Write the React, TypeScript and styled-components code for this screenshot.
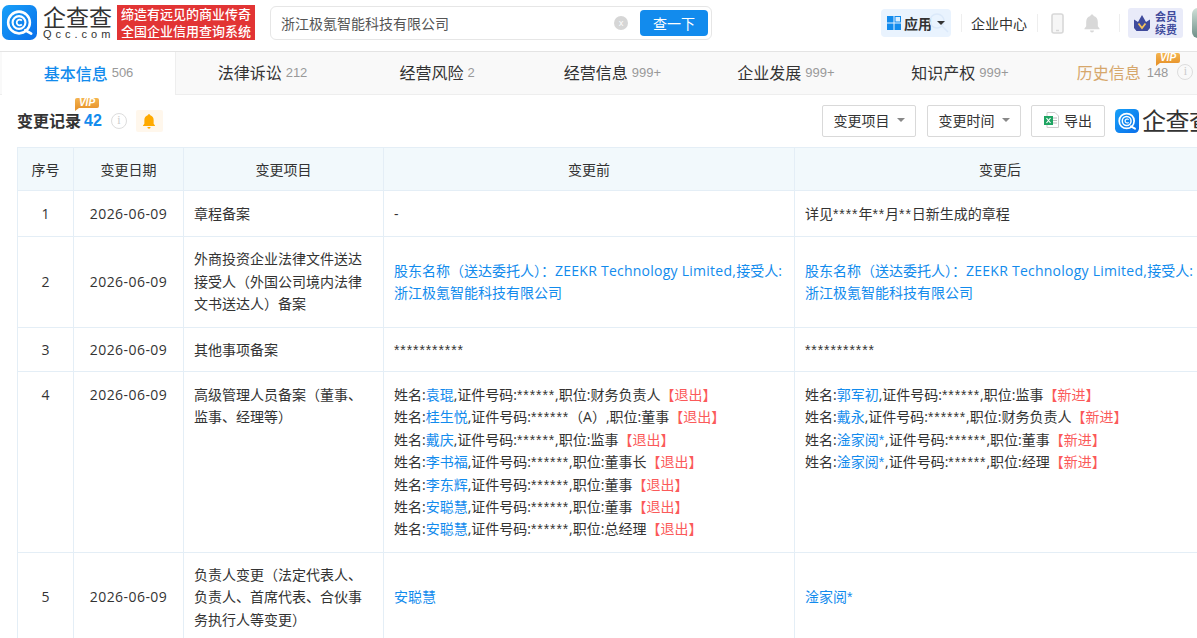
import React from "react";
import styled, { createGlobalStyle } from "styled-components";

const Global = createGlobalStyle`
  html, body { margin: 0; padding: 0; background: #fff; }
  body { font-family: "Open Sans", "Noto Sans CJK SC", sans-serif; color: #333; font-size: 14px; }
  * { box-sizing: border-box; }
`;

const Page = styled.div`
  width: 1197px;
  height: 638px;
  overflow: hidden;
  background: #fff;
`;

const Header = styled.header`
  height: 52px;
  display: flex;
  align-items: flex-start;
  padding: 5px 0 0 2px;
  background: #fff;
  border-bottom: 1px solid #e4e4e4;
  box-shadow: 0 1px 3px rgba(0, 0, 0, 0.08);
  position: relative;
`;

const LogoWrap = styled.div`
  display: flex;
  width: 115px;
  height: 35px;
  gap: 6px;
  flex: none;
`;

const LogoWords = styled.div`
  display: flex;
  flex-direction: column;
  align-items: flex-start;
  color: #333;
`;

const LogoCn = styled.span`
  font-size: 23px;
  line-height: 24px;
  font-weight: 400;
  color: #333;
`;

const LogoEn = styled.span`
  font-size: 11px;
  line-height: 11px;
  letter-spacing: 4px;
  font-family: "Liberation Sans", sans-serif;
  color: #333;
`;

const Banner = styled.div`
  width: 138px;
  height: 35px;
  background: #e23434;
  color: #fff;
  font-size: 13px;
  line-height: 17px;
  font-weight: 500;
  text-align: center;
  white-space: nowrap;
  padding-top: 1px;
  flex: none;
`;

const SearchBox = styled.div`
  margin: 1px 0 0 15px;
  width: 442px;
  height: 34px;
  border: 1px solid #e6e6e6;
  border-radius: 6px;
  display: flex;
  align-items: center;
  padding: 0 3px 0 10px;
  flex: none;
`;

const SearchText = styled.span`
  flex: 1;
  font-size: 14px;
  color: #555;
`;

const Clear = styled.span`
  width: 14px;
  height: 14px;
  border-radius: 50%;
  background: #d6d6d6;
  color: #fff;
  font-size: 9px;
  line-height: 14px;
  text-align: center;
  margin-right: 12px;
`;

const SearchButton = styled.button`
  width: 68px;
  height: 26px;
  border: 0;
  border-radius: 4px;
  background: #128bed;
  color: #fff;
  font: inherit;
  font-size: 14px;
  padding: 0;
`;

const AppPill = styled.div`
  margin: 4px 0 0 169px;
  width: 70px;
  height: 28px;
  background: #e9f3fe;
  border-radius: 4px;
  display: flex;
  align-items: center;
  padding-left: 6px;
  gap: 3px;
  font-size: 14px;
  font-weight: 700;
  color: #333;
  flex: none;
  position: relative;
`;

const PillGlass = styled.svg`
  position: absolute;
  right: 1px;
  top: 3px;
`;

const Caret = styled.i<{ $color?: string }>`
  width: 0;
  height: 0;
  border-left: 4px solid transparent;
  border-right: 4px solid transparent;
  border-top: 4px solid ${(p) => p.$color || "#333"};
  display: inline-block;
  margin-left: 2px;
  position: relative;
`;

const VLine = styled.span<{ $ml?: number }>`
  width: 1px;
  height: 18px;
  background: #eee;
  flex: none;
  margin-top: 9px;
  margin-left: ${(p) => p.$ml || 0}px;
`;

const HeaderLink = styled.span`
  margin: 8px 10px 0 9px;
  font-size: 14px;
  line-height: 22px;
  color: #333;
  width: 56px;
  white-space: nowrap;
  flex: none;
`;

const IconSlot = styled.span<{ $w: number }>`
  width: ${(p) => p.$w}px;
  display: flex;
  justify-content: center;
  margin-top: 8px;
  flex: none;
`;

const Member = styled.div`
  margin: 3px 0 0 8px;
  width: 55px;
  height: 30px;
  background: #e9ebf9;
  border-radius: 3px;
  display: flex;
  align-items: center;
  justify-content: center;
  gap: 5px;
  flex: none;
`;

const MemberText = styled.span`
  font-size: 11px;
  line-height: 13px;
  font-weight: 700;
  color: #3f4a9c;
  width: 22px;
`;

const Avatar = styled.span`
  width: 16px;
  height: 30px;
  margin: 3px 0 0 9px;
  border-radius: 6px 0 0 6px;
  background: linear-gradient(#cfe0d8, #6f8f88);
  flex: none;
`;

const Tabs = styled.nav`
  height: 43px;
  display: flex;
  background: #f9f9f9;
  padding-left: 2px;
  border-bottom: 1px solid #eee;
  position: relative;
`;

const Tab = styled.div<{ $w: number; $active?: boolean }>`
  width: ${(p) => p.$w}px;
  flex: none;
  display: flex;
  align-items: center;
  justify-content: center;
  gap: 4px;
  padding-bottom: 2px;
  white-space: nowrap;
  position: relative;
  background: ${(p) => (p.$active ? "#fff" : "transparent")};
  border-right: ${(p) => (p.$active ? "1px solid #eee" : "0")};
  margin-bottom: ${(p) => (p.$active ? "-1px" : "0")};
`;

const TabLabel = styled.span<{ $tone?: string }>`
  font-size: 16px;
  font-weight: ${(p) => (p.$tone === "blue" ? 500 : 400)};
  color: ${(p) => (p.$tone === "blue" ? "#128bed" : p.$tone === "gold" ? "#d6a76c" : "#333")};
`;

const TabCount = styled.span<{ $ml?: number }>`
  font-size: 13px;
  color: #999;
  font-family: "Liberation Sans", sans-serif;
  margin-left: ${(p) => p.$ml || 0}px;
`;

const VipBadge = styled.span`
  position: absolute;
  background: linear-gradient(#f5b54f, #e8962f);
  color: #fff;
  font-size: 10px;
  font-weight: 700;
  font-style: italic;
  line-height: 10px;
  width: 24px;
  height: 10px;
  text-align: center;
  border-radius: 2px 2px 2px 0;
  font-family: "Liberation Sans", sans-serif;
  &::after {
    content: "";
    position: absolute;
    left: 0;
    top: 100%;
    border-top: 3px solid #e8962f;
    border-right: 4px solid transparent;
  }
`;

const TabVip = styled(VipBadge)`
  left: 108px;
  top: 1px;
`;

const TitleVip = styled(VipBadge)`
  left: 58px;
  top: -12px;
`;

const InfoDot = styled.span<{ $size: number; $ml?: number }>`
  width: ${(p) => p.$size}px;
  height: ${(p) => p.$size}px;
  margin-left: ${(p) => p.$ml || 0}px;
  border: 1.5px solid #ddd;
  border-radius: 50%;
  color: #ccc;
  font-size: ${(p) => p.$size - 4}px;
  line-height: ${(p) => p.$size - 3}px;
  text-align: center;
  font-family: "Liberation Serif", serif;
  flex: none;
`;

const Section = styled.section`
  padding: 0 0 0 17px;
  width: 1300px;
`;

const TitleBar = styled.div`
  height: 52px;
  display: flex;
  align-items: center;
  width: 1180px;
`;

const TitleGroup = styled.div`
  display: flex;
  align-items: center;
  position: relative;
`;

const Title = styled.h2`
  margin: 0;
  font-size: 16px;
  line-height: 22px;
  font-weight: 700;
  color: #333;
`;

const TitleCount = styled.span`
  font-size: 16px;
  line-height: 22px;
  font-family: "Liberation Sans", sans-serif;
  font-weight: 700;
  color: #128bed;
  margin: 0 9px 0 3px;
`;

const BellBox = styled.span`
  width: 27px;
  height: 22px;
  margin-left: 9px;
  background: #fff7ec;
  border-radius: 2px;
  display: flex;
  align-items: center;
  justify-content: center;
`;

const Tools = styled.div`
  margin-left: auto;
  display: flex;
  align-items: center;
  gap: 10px;
`;

const ToolButton = styled.div<{ $w: number; $mr?: number }>`
  width: ${(p) => p.$w}px;
  height: 32px;
  margin-right: ${(p) => p.$mr || 0}px;
  border: 1px solid #d9d9d9;
  border-radius: 2px;
  display: flex;
  align-items: center;
  justify-content: center;
  gap: 5px;
  padding-bottom: 2px;
  font-size: 14px;
  color: #333;
  flex: none;
`;

const MarkWrap = styled.div`
  display: flex;
  align-items: center;
  gap: 3px;
  width: 82px;
  overflow: hidden;
  white-space: nowrap;
  flex: none;
  & > svg { flex: none; }
`;

const MarkText = styled.span`
  font-size: 24px;
  line-height: 24px;
  letter-spacing: -0.5px;
  color: #333;
`;

const Table = styled.table`
  border-collapse: collapse;
  table-layout: fixed;
  width: 1188px;
  font-size: 14px;
  color: #333;
`;

const Th = styled.th<{ $w: number }>`
  width: ${(p) => p.$w}px;
  height: 43px;
  background: #f2f9fc;
  border: 1px solid #e4eef6;
  font-weight: 400;
  text-align: center;
  padding: 0;
`;

const Td = styled.td<{ $center?: boolean; $top?: boolean }>`
  border: 1px solid #e4eef6;
  padding: ${(p) => (p.$top ? "12px 10px 0" : "0 10px")};
  line-height: 22.4px;
  text-align: ${(p) => (p.$center ? "center" : "left")};
  vertical-align: ${(p) => (p.$top ? "top" : "middle")};
`;

const Row = styled.tr<{ $h: number; $nudge?: boolean }>`
  height: ${(p) => p.$h}px;
  & > td {
    padding-top: ${(p) => (p.$nudge ? "1px" : undefined)};
  }
`;

const Link = styled.span`
  color: #128bed;
`;

const Red = styled.span`
  color: #fb5a5a;
`;

const Line = styled.div`
  white-space: nowrap;
`;

const Stars = styled.span`
  font-family: "Liberation Sans", sans-serif;
  letter-spacing: 0.9px;
`;

const DateText = styled.span`
  letter-spacing: 0.45px;
`;

const Latin = styled.span`
  letter-spacing: 0.25px;
`;

const Masked = ({ text }: { text: string }) => (
  <>
    {text.split(/(\*+)/).map((part, i) =>
      part.startsWith("*") ? <Stars key={i}>{part}</Stars> : part
    )}
  </>
);

const LogoMark = ({ size, id }: { size: number; id: string }) => (
  <svg width={size} height={size} viewBox="0 0 36 36">
    <defs>
      <linearGradient id={id} x1="0" y1="0" x2="1" y2="1">
        <stop offset="0" stopColor="#18a0f8" />
        <stop offset="1" stopColor="#0a6fea" />
      </linearGradient>
    </defs>
    <rect width="36" height="36" rx="7" fill={`url(#${id})`} />
    <circle cx="17.5" cy="18" r="11.2" fill="none" stroke="#fff" strokeWidth="2.6" />
    <circle cx="17.5" cy="18" r="6.6" fill="none" stroke="#fff" strokeWidth="2.2" />
    <path d="M20.4 16a3 3 0 1 0 0 4" fill="none" stroke="#fff" strokeWidth="1.8" />
    <path d="M24 26l6 3.5" stroke="#fff" strokeWidth="2.8" strokeLinecap="round" />
  </svg>
);

const Bell = ({ color, size }: { color: string; size: number }) => (
  <svg width={size} height={size} viewBox="0 0 20 20">
    <path d="M10 1.5c.9 0 1.5.6 1.6 1.4 2.7.7 4.2 3 4.2 5.8v4.6l1.7 2.2v.7h-15v-.7l1.7-2.2V8.7c0-2.8 1.5-5.1 4.2-5.8.1-.8.7-1.4 1.6-1.4z" fill={color} />
    <path d="M8 17.6h4a2 2 0 0 1-4 0z" fill={color} />
  </svg>
);

const GridIcon = () => (
  <svg width="14" height="14" viewBox="0 0 14 14">
    <rect x="0" y="0" width="6.5" height="6.5" fill="#128bed" />
    <rect x="8" y="0.5" width="5.5" height="5.5" fill="#dcefff" stroke="#128bed" />
    <rect x="0" y="7.5" width="6.5" height="6.5" fill="#128bed" />
    <rect x="7.5" y="7.5" width="6.5" height="6.5" fill="#128bed" />
  </svg>
);

const PhoneIcon = () => (
  <svg width="13" height="21" viewBox="0 0 13 21">
    <rect x="1" y="1" width="11" height="19" rx="2" fill="#f6f6f6" stroke="#d8d8d8" strokeWidth="1.6" />
    <path d="M5 17.5h3" stroke="#d8d8d8" strokeWidth="1.4" />
  </svg>
);

const CrownIcon = () => (
  <svg width="16" height="16" viewBox="0 0 16 16">
    <path d="M0 4.500l4 2.500L8 0l4 7 4-2.500V13l-2.500 3h-11L0 13z" fill="#3f4a9c" />
    <path d="M4.500 8.500L8 13l3.500-4.500" fill="none" stroke="#f5c35a" strokeWidth="1.8" />
  </svg>
);

const ExcelIcon = () => (
  <svg width="15" height="16" viewBox="0 0 15 16">
    <path d="M3 .5h8l3.500 3.500v11.500H3z" fill="#fff" stroke="#ccc" />
    <path d="M9 6h4M9 8.500h4M9 11h4" stroke="#bbb" />
    <rect x="0" y="4" width="9" height="9" fill="#1fa462" />
    <path d="M2.500 6l4 5M6.500 6l-4 5" stroke="#fff" strokeWidth="1.2" />
  </svg>
);

const tabs = [
  { label: "基本信息", count: "506", w: 174, tone: "blue", active: true },
  { label: "法律诉讼", count: "212", w: 173 },
  { label: "经营风险", count: "2", w: 176 },
  { label: "经营信息", count: "999+", w: 175 },
  { label: "企业发展", count: "999+", w: 172 },
  { label: "知识产权", count: "999+", w: 176 },
  { label: "历史信息", count: "148", w: 174, tone: "gold", vip: true },
];

const oldPeople: [string, string, string][] = [
  ["袁琨", "******", "财务负责人"],
  ["桂生悦", "******（A）", "董事"],
  ["戴庆", "******", "监事"],
  ["李书福", "******", "董事长"],
  ["李东辉", "******", "董事"],
  ["安聪慧", "******", "董事"],
  ["安聪慧", "******", "总经理"],
];

const newPeople: [string, string, string][] = [
  ["郭军初", "******", "监事"],
  ["戴永", "******", "财务负责人"],
  ["淦家阅*", "******", "董事"],
  ["淦家阅*", "******", "经理"],
];

const People = ({ list, mark }: { list: [string, string, string][]; mark: string }) => (
  <>
    {list.map(([name, id, job], i) => (
      <Line key={i}>
        姓名:<Link><Masked text={name} /></Link>,证件号码:<Masked text={id} />,职位:{job}
        <Red>【{mark}】</Red>
      </Line>
    ))}
  </>
);

const Agent = () => (
  <Link>
    股东名称（送达委托人）：<Latin>ZEEKR Technology Limited,</Latin>接受人:
    <br />
    浙江极氪智能科技有限公司
  </Link>
);

const Day = () => <DateText>2026-06-09</DateText>;

export default function App() {
  return (
    <Page>
      <Global />
      <Header>
        <LogoWrap>
          <LogoMark size={35} id="lg1" />
          <LogoWords>
            <LogoCn>企查查</LogoCn>
            <LogoEn>Qcc.com</LogoEn>
          </LogoWords>
        </LogoWrap>
        <Banner>
          缔造有远见的商业传奇
          <br />
          全国企业信用查询系统
        </Banner>
        <SearchBox>
          <SearchText>浙江极氪智能科技有限公司</SearchText>
          <Clear>x</Clear>
          <SearchButton>查一下</SearchButton>
        </SearchBox>
        <AppPill>
          <PillGlass width="22" height="22" viewBox="0 0 22 22">
            <circle cx="9" cy="9" r="7" fill="none" stroke="#dbe9fa" strokeWidth="1.5" />
            <path d="M14 14l6 6" stroke="#dbe9fa" strokeWidth="1.5" />
          </PillGlass>
          <GridIcon />
          应用
          <Caret />
        </AppPill>
        <VLine $ml={10} />
        <HeaderLink>企业中心</HeaderLink>
        <VLine />
        <IconSlot $w={38}>
          <PhoneIcon />
        </IconSlot>
        <IconSlot $w={32}>
          <Bell color="#d8d8d8" size={20} />
        </IconSlot>
        <VLine $ml={11} />
        <Member>
          <CrownIcon />
          <MemberText>会员续费</MemberText>
        </Member>
        <Avatar />
      </Header>
      <Tabs>
        {tabs.map((t) => (
          <Tab key={t.label} $w={t.w} $active={t.active}>
            <TabLabel $tone={t.tone}>{t.label}</TabLabel>
            <TabCount $ml={t.vip ? 2 : 0}>{t.count}</TabCount>
            {t.vip && (
              <>
                <InfoDot $size={16} $ml={5}>i</InfoDot>
                <TabVip>VIP</TabVip>
              </>
            )}
          </Tab>
        ))}
      </Tabs>
      <Section>
        <TitleBar>
          <TitleGroup>
            <Title>变更记录</Title>
            <TitleCount>42</TitleCount>
            <InfoDot $size={16}>i</InfoDot>
            <BellBox>
              <Bell color="#ffaa00" size={16} />
            </BellBox>
            <TitleVip>VIP</TitleVip>
          </TitleGroup>
          <Tools>
            <ToolButton $w={94} $mr={1}>
              变更项目 <Caret $color="#888" />
            </ToolButton>
            <ToolButton $w={94}>
              变更时间 <Caret $color="#888" />
            </ToolButton>
            <ToolButton $w={74}>
              <ExcelIcon />
              导出
            </ToolButton>
            <MarkWrap>
              <LogoMark size={24} id="lg2" />
              <MarkText>企查查</MarkText>
            </MarkWrap>
          </Tools>
        </TitleBar>
        <Table>
          <thead>
            <tr>
              <Th $w={56}>序号</Th>
              <Th $w={110}>变更日期</Th>
              <Th $w={200}>变更项目</Th>
              <Th $w={411}>变更前</Th>
              <Th $w={411}>变更后</Th>
            </tr>
          </thead>
          <tbody>
            <Row $h={46} $nudge>
              <Td $center>1</Td>
              <Td $center><Day /></Td>
              <Td>章程备案</Td>
              <Td>-</Td>
              <Td><Masked text="详见****年**月**日新生成的章程" /></Td>
            </Row>
            <Row $h={91}>
              <Td $center>2</Td>
              <Td $center><Day /></Td>
              <Td>外商投资企业法律文件送达接受人（外国公司境内法律文书送达人）备案</Td>
              <Td><Agent /></Td>
              <Td><Agent /></Td>
            </Row>
            <Row $h={44} $nudge>
              <Td $center>3</Td>
              <Td $center><Day /></Td>
              <Td>其他事项备案</Td>
              <Td><Masked text="***********" /></Td>
              <Td><Masked text="***********" /></Td>
            </Row>
            <Row $h={181}>
              <Td $center $top>4</Td>
              <Td $center $top><Day /></Td>
              <Td $top>高级管理人员备案（董事、监事、经理等）</Td>
              <Td $top><People list={oldPeople} mark="退出" /></Td>
              <Td $top><People list={newPeople} mark="新进" /></Td>
            </Row>
            <Row $h={90}>
              <Td $center>5</Td>
              <Td $center><Day /></Td>
              <Td>负责人变更（法定代表人、负责人、首席代表、合伙事务执行人等变更）</Td>
              <Td><Link>安聪慧</Link></Td>
              <Td><Link><Masked text="淦家阅*" /></Link></Td>
            </Row>
          </tbody>
        </Table>
      </Section>
    </Page>
  );
}
